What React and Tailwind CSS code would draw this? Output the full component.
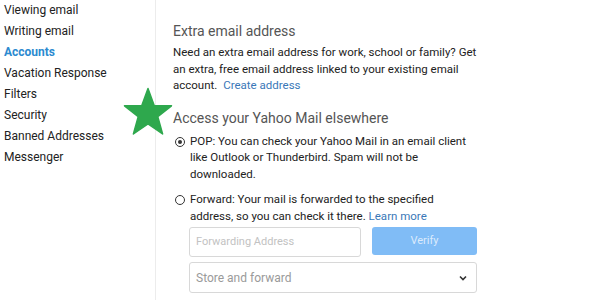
import React from "react";

const navItems = [
  "Viewing email",
  "Writing email",
  "Accounts",
  "Vacation Response",
  "Filters",
  "Security",
  "Banned Addresses",
  "Messenger",
];

function Star() {
  return (
    <svg className="absolute left-[123px] top-[87px]" width="50" height="50" viewBox="0 0 50 50">
      <polygon
        points="25,1.5 31.2,18.5 48.5,18.8 34.8,29.6 39.6,47 25,36.8 10.4,47 15.2,29.6 1.5,18.8 18.8,18.5"
        fill="#2ea84d"
        stroke="#2ea84d"
        strokeWidth="1.5"
        strokeLinejoin="round"
      />
    </svg>
  );
}

export default function App() {
  return (
    <div className="relative w-[600px] h-[300px] overflow-hidden bg-white flex text-[#333]" style={{ fontFamily: 'Roboto, "Open Sans", sans-serif' }}>
      <div className="w-[156px] shrink-0 border-r border-[#ececec] pl-[4px] pt-[2px] flex flex-col">
        {navItems.map((n) => (
          <div
            key={n}
            className={
              "h-[21px] leading-[17px] text-[12px] " +
              (n === "Accounts" ? "font-bold text-[#2b8ad0]" : "text-[#222]")
            }
          >
            {n}
          </div>
        ))}
      </div>
      <div className="flex-1 pl-[17px] pt-[21px]">
        <h2 className="text-[14px] leading-[20px] text-[#555]">Extra email address</h2>
        <p className="mt-[3px] text-[11.5px] leading-[16.5px] text-[#222] whitespace-nowrap">
          Need an extra email address for work, school or family? Get
          <br />
          an extra, free email address linked to your existing email
          <br />
          account. <span className="ml-[3px] text-[#3a78b8]">Create address</span>
        </p>
        <h2 className="mt-[14px] text-[14px] leading-[20px] text-[#555]">Access your Yahoo Mail elsewhere</h2>
        <div className="mt-[5px] flex gap-[5px] text-[11.5px] leading-[16.5px] text-[#222]">
          <span className="mt-[4px] w-[10px] h-[10px] rounded-full border border-[#333] flex items-center justify-center shrink-0 ml-[2px]">
            <span className="w-[4px] h-[4px] rounded-full bg-[#333]"></span>
          </span>
          <p className="whitespace-nowrap">
            POP: You can check your Yahoo Mail in an email client
            <br />
            like Outlook or Thunderbird. Spam will not be
            <br />
            downloaded.
          </p>
        </div>
        <div className="mt-[9px] flex gap-[5px] text-[11.5px] leading-[16.5px] text-[#222]">
          <span className="mt-[4px] w-[10px] h-[10px] rounded-full border border-[#333] shrink-0 ml-[2px]"></span>
          <p className="whitespace-nowrap">
            Forward: Your mail is forwarded to the specified
            <br />
            address, so you can check it there. <span className="text-[#3a78b8]">Learn more</span>
          </p>
        </div>
        <div className="mt-[3px] ml-[16px] w-[288px] flex flex-col gap-[5px]">
          <div className="flex gap-[11px]">
            <div className="w-[172px] h-[30px] border border-[#d8d8d8] rounded-[3px] flex items-center px-[6px] text-[11px] text-[#c2c2c2]">
              Forwarding Address
            </div>
            <div className="w-[105px] h-[28px] rounded-[3px] bg-[#80bcf6] flex items-center justify-center text-[11px] text-[#dbeafc]">
              Verify
            </div>
          </div>
          <div className="h-[31px] border border-[#d8d8d8] rounded-[3px] flex items-center justify-between px-[6px] text-[12px] text-[#9a9a9a]">
            <span>Store and forward</span>
            <svg width="10" height="8" viewBox="0 0 10 8" className="mr-[2px]">
              <path d="M2 2.5 L5 5.5 L8 2.5" stroke="#333" strokeWidth="1.6" fill="none" />
            </svg>
          </div>
        </div>
      </div>
      <Star />
    </div>
  );
}
